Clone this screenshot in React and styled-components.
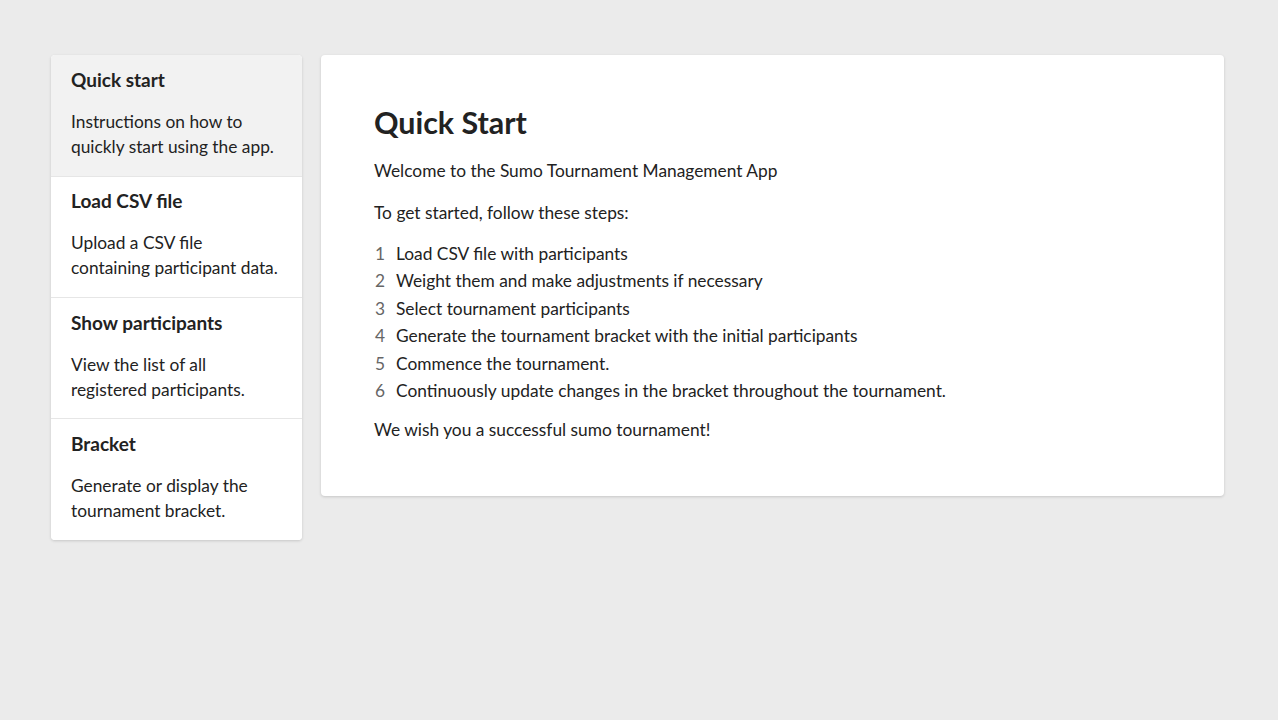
import React from "react";
import styled, { createGlobalStyle } from "styled-components";

const Global = createGlobalStyle`
  html, body { margin: 0; padding: 0; background: #ebebeb; }
  body { font-family: Lato, "Open Sans", sans-serif; color: #222; }
  * { box-sizing: border-box; }
`;

const Page = styled.div`
  display: flex;
  align-items: flex-start;
  gap: 19px;
  padding: 55px 54px 0 51px;
  min-height: 720px;
`;

const Sidebar = styled.nav`
  width: 251px;
  flex: none;
  background: #fff;
  border-radius: 4px;
  box-shadow: 0 1px 3px rgba(0, 0, 0, 0.16);
  overflow: hidden;
  display: flex;
  flex-direction: column;
`;

const Item = styled.div`
  padding: ${(p) => p.$pt}px 20px 17px;
  height: ${(p) => p.$h}px;
  background: ${(p) => (p.$active ? "#f2f2f2" : "#fff")};
  border-top: ${(p) => (p.$first ? "none" : "1px solid #e6e6e6")};
  cursor: pointer;
`;

const ItemTitle = styled.div`
  font-size: 19px;
  font-weight: 700;
  line-height: 24px;
  color: #222;
  margin-bottom: 17px;
`;

const ItemDesc = styled.div`
  font-size: 17.33px;
  line-height: 25px;
  color: #222;
`;

const Main = styled.main`
  flex: 1;
  background: #fff;
  border-radius: 4px;
  box-shadow: 0 1px 3px rgba(0, 0, 0, 0.16);
  padding: 49px 53px 54px;
`;

const Heading = styled.h1`
  margin: 0 0 18px;
  font-size: 30.4px;
  line-height: 36px;
  font-weight: 700;
  color: #222;
`;

const Para = styled.p`
  margin: 0 0 17px;
  font-size: 17.33px;
  line-height: 25px;
  color: #222;
  &:last-child { margin-bottom: 0; }
`;

const Steps = styled.ol`
  list-style: none;
  margin: -2px 0 13px;
  padding: 0;
`;

const Step = styled.li`
  display: flex;
  font-size: 17.33px;
  line-height: 27.4px;
  color: #222;
`;

const Num = styled.span`
  width: 22px;
  flex: none;
  padding-left: 1px;
  color: #666;
`;

const items = [
  { title: "Quick start", desc: "Instructions on how to quickly start using the app.", pt: 13, h: 121 },
  { title: "Load CSV file", desc: "Upload a CSV file containing participant data.", pt: 12, h: 121 },
  { title: "Show participants", desc: "View the list of all registered participants.", pt: 13, h: 121 },
  { title: "Bracket", desc: "Generate or display the tournament bracket.", pt: 13, h: 122 },
];

const steps = [
  "Load CSV file with participants",
  "Weight them and make adjustments if necessary",
  "Select tournament participants",
  "Generate the tournament bracket with the initial participants",
  "Commence the tournament.",
  "Continuously update changes in the bracket throughout the tournament.",
];

export default function App() {
  return (
    <>
      <Global />
      <Page>
        <Sidebar>
          {items.map((it, i) => (
            <Item key={it.title} $active={i === 0} $first={i === 0} $pt={it.pt} $h={it.h}>
              <ItemTitle>{it.title}</ItemTitle>
              <ItemDesc>{it.desc}</ItemDesc>
            </Item>
          ))}
        </Sidebar>
        <Main>
          <Heading>Quick Start</Heading>
          <Para>Welcome to the Sumo Tournament Management App</Para>
          <Para>To get started, follow these steps:</Para>
          <Steps>
            {steps.map((s, i) => (
              <Step key={i}>
                <Num>{i + 1}</Num>
                <span>{s}</span>
              </Step>
            ))}
          </Steps>
          <Para>We wish you a successful sumo tournament!</Para>
        </Main>
      </Page>
    </>
  );
}
